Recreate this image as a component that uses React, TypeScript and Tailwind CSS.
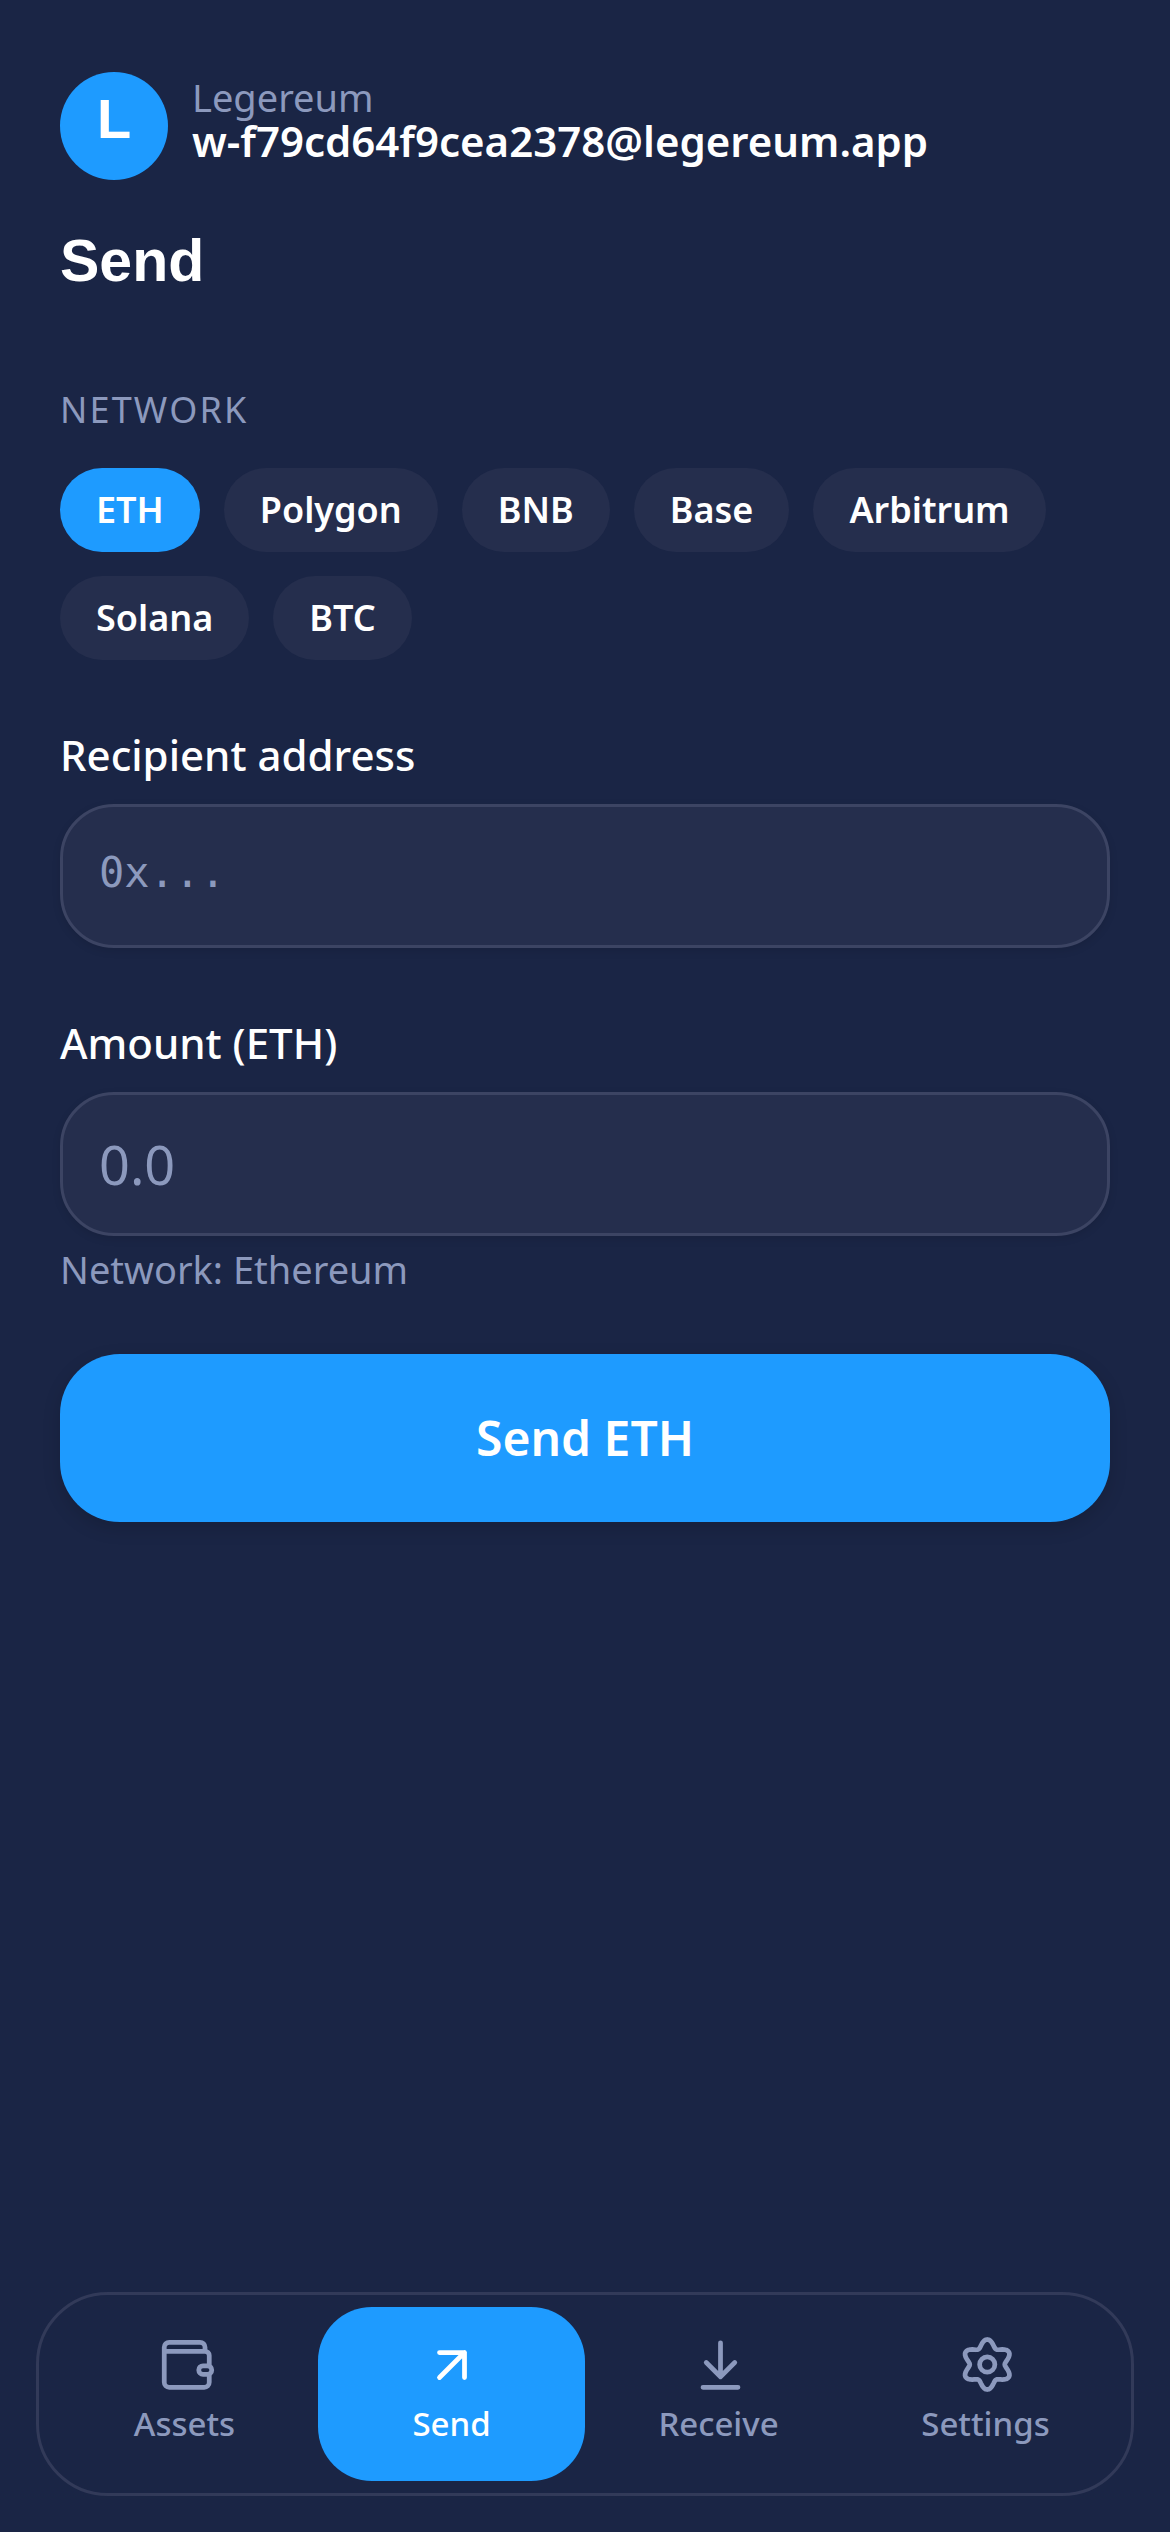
import type { ReactNode } from "react";

const NETWORKS = ["ETH", "Polygon", "BNB", "Base", "Arbitrum", "Solana", "BTC"];

// wavy six-lobed outline of the settings gear
function gearPath() {
  const pts: string[] = [];
  for (let i = 0; i < 96; i++) {
    const a = (i / 96) * Math.PI * 2;
    const r = 8.5 + 1.5 * Math.cos(6 * a);
    const x = 12.5 + r * Math.sin(a);
    const y = 11.8 - r * Math.cos(a);
    pts.push(`${x.toFixed(2)} ${y.toFixed(2)}`);
  }
  return `M${pts.join("L")}Z`;
}

function NavIcon({ children }: { children: ReactNode }) {
  return (
    <svg
      width="60"
      height="60"
      viewBox="0 0 24 24"
      fill="none"
      stroke="currentColor"
      strokeWidth="1.9"
      strokeLinecap="round"
      strokeLinejoin="round"
    >
      {children}
    </svg>
  );
}

const NAV = [
  {
    label: "Assets",
    icon: (
      <>
        <path d="M20 6.5V4.9a2 2 0 0 0-2-2H5.7a2 2 0 0 0-2 2V18.9a2 2 0 0 0 2 2h14a2 2 0 0 0 2-2V8.2a1.7 1.7 0 0 0-1.7-1.7H3.7" />
        <rect x="17.5" y="12.3" width="5.2" height="3.4" rx="1.7" fill="#1a2545" />
      </>
    ),
  },
  {
    label: "Send",
    active: true,
    icon: <path d="M7 7h10v10M7 17 17 7" />,
  },
  {
    label: "Receive",
    icon: <path d="M12.6 3.1V16.5M6.9 11l5.7 5.7 5.7-5.7M5.6 20.9h14" />,
  },
  {
    label: "Settings",
    icon: (
      <>
        <path d={gearPath()} />
        <circle cx="12.5" cy="11.8" r="3.05" />
      </>
    ),
  },
];

function Field({ label, placeholder, mono }: { label: string; placeholder: string; mono?: boolean }) {
  return (
    <div>
      <div className="mb-[21px] text-[42px] leading-[57px] font-medium text-white">{label}</div>
      <div className="flex h-[144px] items-center rounded-[54px] border-[3px] border-[#3c4463] bg-[#252e4d] px-[36px] shadow-[0_3px_9px_rgba(0,0,0,0.1)]">
        <span
          className={
            mono
              ? "pb-[7px] text-[42px] text-[#8c99bd] [font-family:'DejaVu_Sans_Mono',monospace]"
              : "text-[54px] text-[#8c99bd]"
          }
        >
          {placeholder}
        </span>
      </div>
    </div>
  );
}

export default function App() {
  return (
    <div className="flex h-[2532px] w-[1170px] flex-col overflow-hidden bg-[#1a2545] [font-family:'Noto_Sans',sans-serif]">
      <div className="flex-1 px-[60px] pt-[72px]">
        <div className="flex items-center gap-[24px]">
          <div className="flex h-[108px] w-[108px] items-center justify-center rounded-full bg-[#1e9bff] pb-[14px] text-[56px] font-bold text-white [font-family:'Liberation_Sans',sans-serif]">
            L
          </div>
          <div className="pb-[14px]">
            <div className="text-[38px] leading-[44px] text-[#8c99bd]">Legereum</div>
            <div className="text-[42px] leading-[44px] font-semibold text-white">w-f79cd64f9cea2378@legereum.app</div>
          </div>
        </div>

        <h1 className="mt-[45px] text-[59px] leading-[72px] font-bold text-white [font-family:'Liberation_Sans',sans-serif]">Send</h1>

        <div className="mt-[89px] text-[36px] leading-[48px] tracking-[2.16px] text-[#8c99bd]">NETWORK</div>
        <div className="mt-[34px] flex flex-wrap gap-[24px]">
          {NETWORKS.map((n, i) => (
            <div
              key={n}
              className={`flex h-[84px] items-center rounded-full px-[36px] text-[36px] font-semibold text-white ${
                i === 0 ? "bg-[#1e9bff]" : "bg-[#252e4d]"
              }`}
            >
              {n}
            </div>
          ))}
        </div>

        <div className="mt-[66px]">
          <Field label="Recipient address" placeholder="0x..." mono />
        </div>
        <div className="mt-[66px]">
          <Field label="Amount (ETH)" placeholder="0.0" />
        </div>
        <div className="mt-[9px] text-[38px] leading-[48px] text-[#8c99bd]">Network: Ethereum</div>

        <div className="mt-[61px] flex h-[168px] items-center justify-center rounded-[60px] bg-[#1e9bff] text-[48px] font-semibold text-white shadow-[0_6px_18px_rgba(0,0,0,0.15)]">
          Send ETH
        </div>
      </div>

      <div className="mx-[36px] mb-[36px] flex h-[204px] items-center rounded-[72px] border-[3px] border-[#323a59] px-[12px]">
        {NAV.map((item) => (
          <div
            key={item.label}
            className={`flex h-[174px] flex-1 flex-col items-center justify-center gap-[6px] rounded-[54px] pb-[8px] ${
              item.active ? "bg-[#1e9bff] text-white" : "text-[#8c99bd]"
            }`}
          >
            <NavIcon>{item.icon}</NavIcon>
            <span className="text-[33px] leading-[45px] font-medium">{item.label}</span>
          </div>
        ))}
      </div>
    </div>
  );
}
